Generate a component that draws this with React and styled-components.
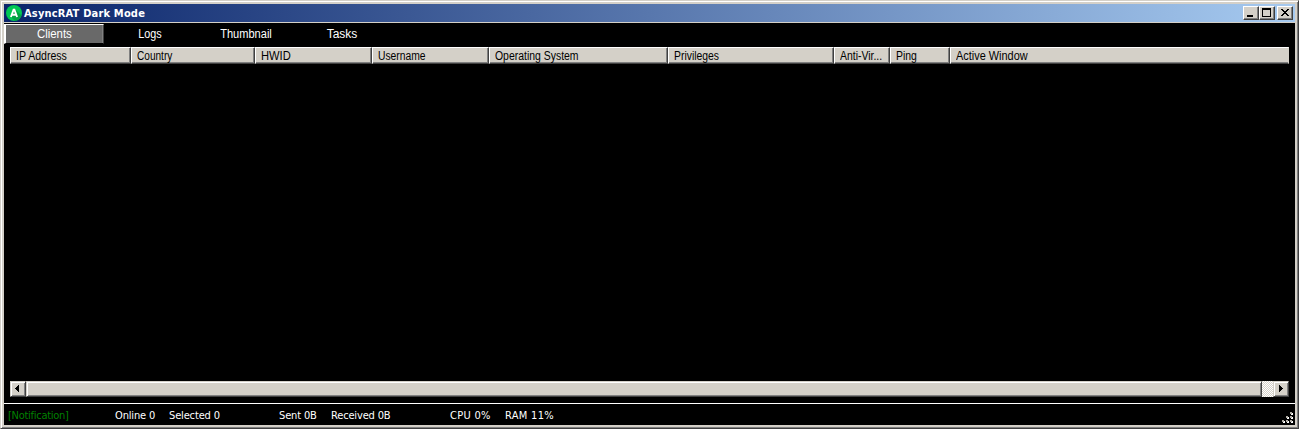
import React from 'react';
import styled, { createGlobalStyle } from 'styled-components';

const Global = createGlobalStyle`
  * { box-sizing: border-box; }
  body { margin: 0; background: #d4d0c8; overflow: hidden; }
`;
const sans = `'Liberation Sans', Arial, sans-serif`;
const tahoma = `'DejaVu Sans Condensed', 'DejaVu Sans', sans-serif`;

const Window = styled.div`
  width: 1299px; height: 429px; display: flex; flex-direction: column;
  background: #d4d0c8; padding: 3px;
  border: 1px solid; border-color: #d4d0c8 #404040 #404040 #d4d0c8;
  box-shadow: inset 1px 1px #fff, inset -1px -1px #808080;
`;
const TitleBar = styled.header`
  height: 18px; flex: none; display: flex; align-items: center; gap: 2px;
  padding: 0 2px; background: linear-gradient(90deg, #0a246a, #a6caf0);
`;
const Title = styled.h1`
  margin: 0; flex: 1; color: #fff; font: bold 11px/18px ${tahoma}; white-space: nowrap;
  letter-spacing: 0.18px; padding-top: 1px;
`;
const Buttons = styled.div`display: flex;`;
const CaptionButton = styled.button`
  width: 16px; height: 14px; padding: 0; margin-left: ${p => p.$gap || 0}px; display: block;
  background: #d4d0c8; border: 1px solid; border-color: #fff #404040 #404040 #fff;
  box-shadow: inset -1px -1px #808080;
  svg { display: block; }
`;
const Body = styled.main`
  margin-top: 1px; flex: 1; min-height: 0; background: #000; display: flex; flex-direction: column;
`;
const Tabs = styled.nav`display: flex; height: 24px; padding-top: 1px;`;
const Tab = styled.div`
  width: ${p => p.$w}px; height: 20px; font: 12px/19px ${sans}; color: #fff;
  display: flex; justify-content: center;
  border: 1px solid transparent; border-left-width: 2px;
  ${p => p.$active && `background:#696969; border-color:#fff #404040 transparent #fff; box-shadow: inset -1px 0 #808080; background-clip: padding-box;`}
`;
const Narrow = styled.span`
  display: inline-block; white-space: nowrap; flex: none;
  transform: scaleX(${p => p.$s}); transform-origin: ${p => p.$from || 'center'};
`;
const List = styled.section`
  margin: 0 6px; height: 350px; display: flex; flex-direction: column; justify-content: space-between;
`;
const HeaderRow = styled.div`display: flex; height: 17px;`;
const HeaderCell = styled.div`
  width: ${p => p.$w}px; flex: none; padding-left: 5px; background: #d4d0c8; overflow: hidden;
  border: 1px solid; border-color: #fff ${p => (p.$last ? '#d4d0c8' : '#404040')} #404040 #fff;
  box-shadow: inset ${p => (p.$last ? 0 : -1)}px -1px #808080;
  font: 12px/16px ${sans}; color: #000; white-space: nowrap;
`;
const ScrollBar = styled.div`
  display: flex; height: 16px;
  background: repeating-conic-gradient(#fff 0 25%, #d4d0c8 0 50%) 0 0 / 2px 2px;
`;
const Raised = styled.div`
  width: ${p => p.$w}px; background: #d4d0c8; border: 1px solid;
  border-color: #d4d0c8 #404040 #404040 #d4d0c8;
  box-shadow: inset 1px 1px #fff, inset -1px -1px #808080;
  margin-right: ${p => p.$mr || 0}px;
  svg { display: block; }
`;
const StatusBar = styled.footer`
  margin-top: auto; height: 22px; border-top: 1px solid #fff; display: flex; padding-left: 4px;
  position: relative;
`;
const Status = styled.span`
  width: ${p => p.$w}px; color: ${p => p.$c || '#fff'}; font: 11px/23px ${tahoma};
  letter-spacing: ${p => p.$ls || 0}px; white-space: nowrap;
`;
const Grip = styled.svg`position: absolute; right: 1px; bottom: 1px;`;

const tabs = [['Clients', 100, 0.95], ['Logs', 91, 0.9], ['Thumbnail', 101, 0.92], ['Tasks', 91, 1]];
const columns = [['IP Address', 121, 0.88], ['Country', 124, 0.84], ['HWID', 117, 0.93], ['Username', 117, 0.86],
  ['Operating System', 179, 0.87], ['Privileges', 166, 0.865], ['Anti-Vir...', 56, 0.87], ['Ping', 60, 0.87],
  ['Active Window', 339, 0.91]];
const statuses = [['[Notification]', 107, -0.27, '#008000'], ['Online 0', 54, -0.15], ['Selected 0', 110, -0.15],
  ['Sent 0B', 52, -0.15], ['Received 0B', 119, -0.16], ['CPU 0%', 55, 0.3], ['RAM 11%', 60, 0.3]];

export default function App() {
  return (
    <>
      <Global />
      <Window>
        <TitleBar>
          <svg width="16" height="16" viewBox="0 0 16 16">
            <circle cx="8" cy="8" r="8" fill="#00c853" />
            <path d="M9 4 15.5 10.5A8 8 0 0 1 9 15.9L5 12Z" fill="#00a344" />
            <path d="M4.9 12 7.6 4.6h.8L11.1 12M6 9.8h4" fill="none" stroke="#fff" strokeWidth="1.9" />
          </svg>
          <Title>AsyncRAT Dark Mode</Title>
          <Buttons>
            <CaptionButton><svg width="14" height="12" shapeRendering="crispEdges"><path d="M3 8h6v2H3z" /></svg></CaptionButton>
            <CaptionButton><svg width="14" height="12" shapeRendering="crispEdges"><path fillRule="evenodd" d="M2 1h9v9H2zM3 3v6h7V3z" /></svg></CaptionButton>
            <CaptionButton $gap={2}><svg width="14" height="12" shapeRendering="crispEdges"><path d="M3 2h2v1H3zM9 2h2v1H9zM4 3h2v1H4zM8 3h2v1H8zM5 4h4v1H5zM6 5h2v1H6zM5 6h4v1H5zM4 7h2v1H4zM8 7h2v1H8zM3 8h2v1H3zM9 8h2v1H9z" /></svg></CaptionButton>
          </Buttons>
        </TitleBar>
        <Body>
          <Tabs>
            {tabs.map(([t, w, s], i) => <Tab key={t} $w={w} $active={i === 0}><Narrow $s={s}>{t}</Narrow></Tab>)}
          </Tabs>
          <List>
            <HeaderRow>
              {columns.map(([t, w, s], i) => (
                <HeaderCell key={t} $w={w} $last={i === columns.length - 1}><Narrow $s={s} $from="left">{t}</Narrow></HeaderCell>
              ))}
            </HeaderRow>
            <ScrollBar>
              <Raised $w={16}><svg width="14" height="14" shapeRendering="crispEdges"><path d="M8 3v7H7V9H6V8H5V7H4V6h1V5h1V4h1V3z" /></svg></Raised>
              <Raised $w={1236} $mr={11} />
              <Raised $w={16}><svg width="14" height="14" shapeRendering="crispEdges"><path d="M5 3v7h1V9h1V8h1V7h1V6H8V5H7V4H6V3z" /></svg></Raised>
            </ScrollBar>
          </List>
          <StatusBar>
            {statuses.map(([t, w, ls, c]) => <Status key={t} $w={w} $ls={ls} $c={c}>{t}</Status>)}
            <Grip width="12" height="12" shapeRendering="crispEdges">
              {[[8, 0], [4, 4], [8, 4], [0, 8], [4, 8], [8, 8]].map(([x, y]) => (
                <g key={`${x}-${y}`}><path d={`M${x + 1} ${y + 1}h2v2h-2z`} fill="#fff" /><path d={`M${x} ${y}h2v2h-2z`} fill="#b0aca4" /></g>
              ))}
            </Grip>
          </StatusBar>
        </Body>
      </Window>
    </>
  );
}
